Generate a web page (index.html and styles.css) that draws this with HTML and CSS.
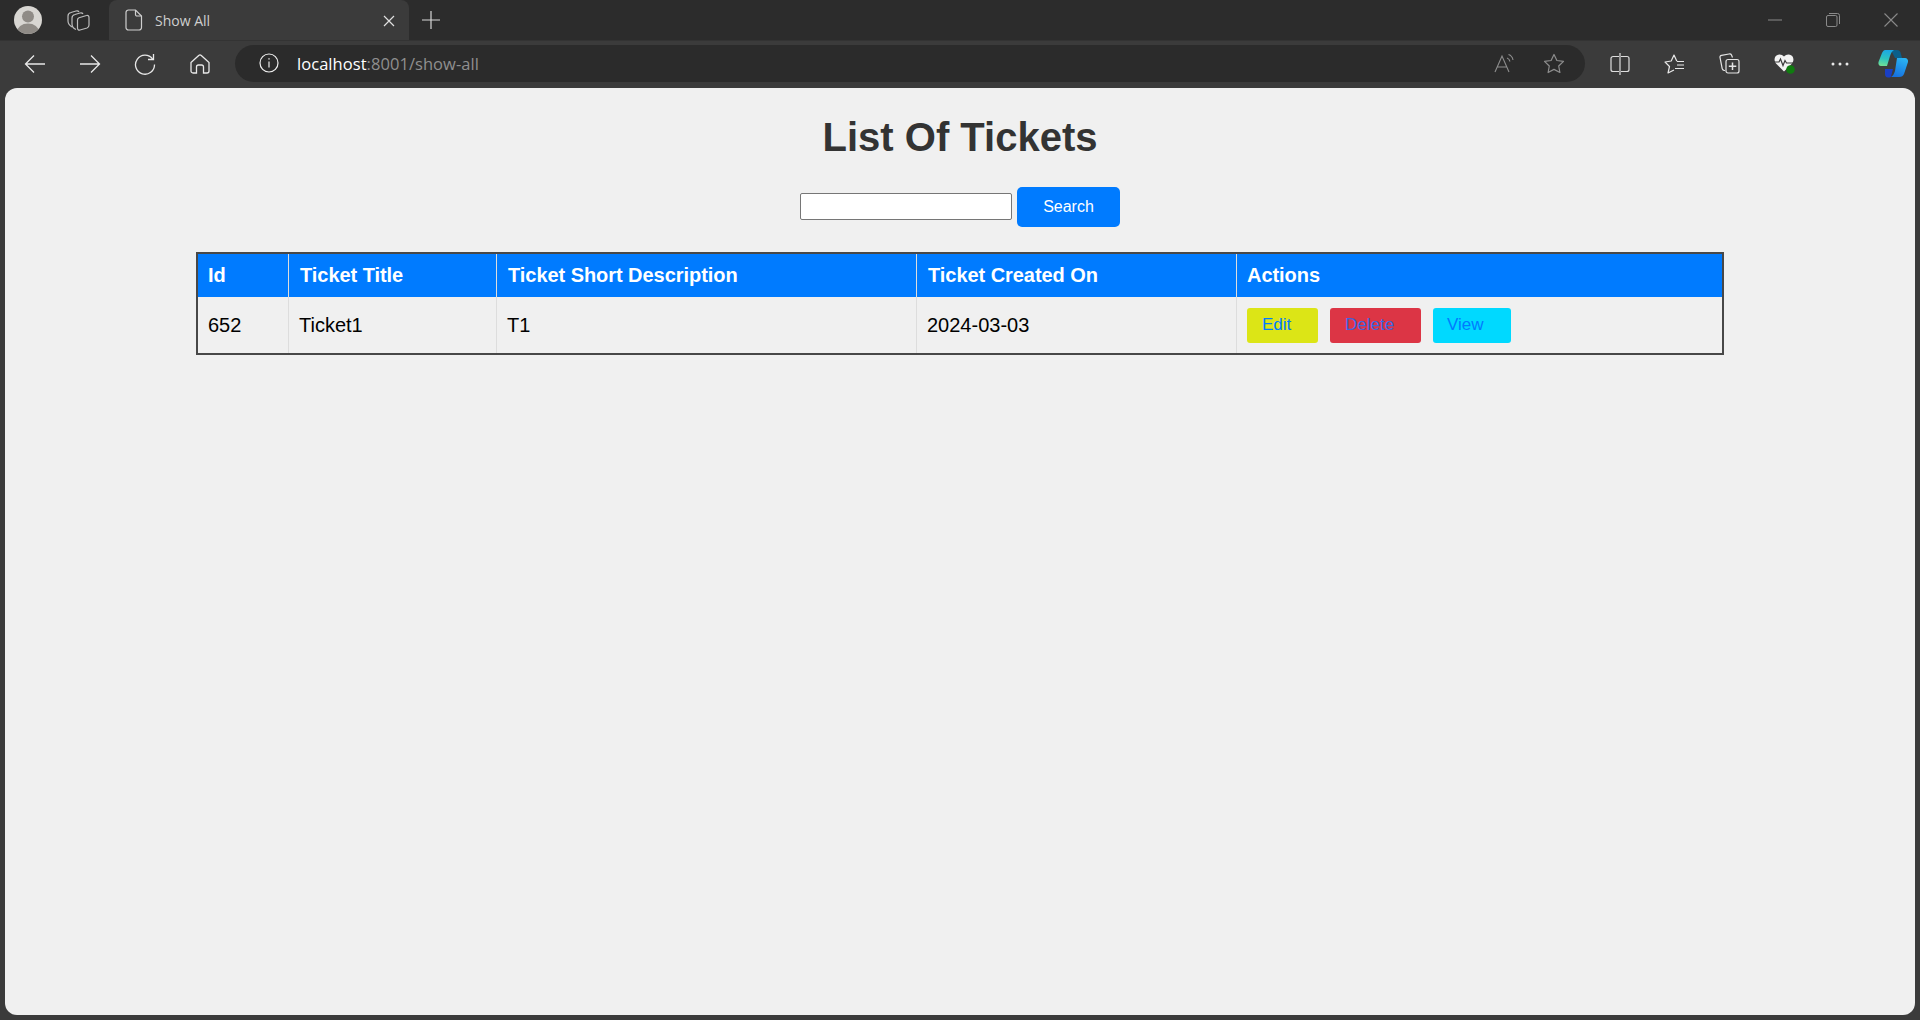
FILE: index.html
```html
<!DOCTYPE html>
<html lang="en">
<head>
<meta charset="utf-8">
<title>Show All</title>
<link rel="stylesheet" href="styles.css">
</head>
<body>
<div class="chrome">
  <div class="tabstrip">
    <div class="profile">
      <svg width="30" height="30" viewBox="0 0 30 30"><defs><clipPath id="pc"><circle cx="15" cy="15" r="14"/></clipPath></defs><circle cx="15" cy="15" r="14" fill="#d8d6d2"/><g clip-path="url(#pc)" fill="#8f8b86"><circle cx="15" cy="11.500" r="6"/><ellipse cx="15" cy="27" rx="11" ry="8.500"/></g></svg>
    </div>
    <div class="wksp">
      <svg width="23" height="21" viewBox="0 0 23 21" fill="none" stroke="#bdbdbd" stroke-width="1.200"><path d="M5 17C2 15 1 13 1 11V6C1 4 2 3 4 2.500L9 1C10.500 .7 11.500 1 12 2"/><path d="M9 19.500C6.500 18.500 5 17 5 14V8C5 6 6 5 8 4.500L13 3C14.500 2.700 15.500 3 16 4"/><path d="M12 7.800L19.500 5.500C21 5 22 6 22 7.500V15C22 16.500 21.500 17.500 20 18L13 20C11.500 20.500 10.500 19.500 10.500 18V10C10.500 9 11 8.200 12 7.800z"/></svg>
    </div>
    <div class="tab">
      <svg class="tab-icon" width="18" height="22" viewBox="0 0 18 22" fill="none" stroke="#cfcfcf" stroke-width="1.200"><path d="M3.500 1h7L16.500 7v11.500a2.500 2.500 0 0 1-2.500 2.500H3.500A2.500 2.500 0 0 1 1 18.500v-15A2.500 2.500 0 0 1 3.500 1z"/><path d="M10.500 1v4.500a1.500 1.500 0 0 0 1.500 1.500h4.500"/></svg>
      <span class="tab-title">Show All</span>
      <svg class="tab-close" width="12" height="12" viewBox="0 0 12 12" stroke="#e0e0e0" stroke-width="1.200"><path d="M1 1l10 10M11 1L1 11"/></svg>
    </div>
    <div class="newtab">
      <svg width="18" height="18" viewBox="0 0 18 18" stroke="#d8d8d8" stroke-width="1.200"><path d="M9 0v18M0 9h18"/></svg>
    </div>
    <div class="winctl">
      <span class="winbtn"><svg width="14" height="14" viewBox="0 0 14 14" stroke="#8a8a8a"><path d="M0 7h14"/></svg></span>
      <span class="winbtn"><svg width="14" height="14" viewBox="0 0 14 14" fill="none" stroke="#8a8a8a"><rect x=".5" y="2.500" width="10.500" height="11" rx="1.500"/><path d="M3 .5h8.500a2 2 0 0 1 2 2V11"/></svg></span>
      <span class="winbtn"><svg width="14" height="14" viewBox="0 0 14 14" stroke="#8a8a8a" stroke-width="1.100"><path d="M.5.5l13 13M13.500.5l-13 13"/></svg></span>
    </div>
  </div>
  <div class="toolbar">
    <div class="navs">
      <span class="navbtn"><svg width="22" height="20" viewBox="0 0 22 20" fill="none" stroke="#e8e8e8" stroke-width="1.300"><path d="M21 10H1.500M10 1.500L1.500 10l8.500 8.500"/></svg></span>
      <span class="navbtn"><svg width="22" height="20" viewBox="0 0 22 20" fill="none" stroke="#e8e8e8" stroke-width="1.300"><path d="M1 10h19.500M12 1.500l8.500 8.500-8.500 8.500"/></svg></span>
      <span class="navbtn"><svg width="22" height="22" viewBox="0 0 22 22" fill="none" stroke="#e8e8e8" stroke-width="1.300"><path d="M18.600 6A9.500 9.500 0 1 0 20.500 11.500"/><path d="M19.500 1v5.500H14"/></svg></span>
      <span class="navbtn"><svg width="20" height="20" viewBox="0 0 20 20" fill="none" stroke="#e8e8e8" stroke-width="1.300"><path d="M1 8.500L8.700 1.500a2 2 0 0 1 2.600 0L19 8.500v8.500a2 2 0 0 1-2 2h-3.500v-6a2 2 0 0 0-2-2h-3a2 2 0 0 0-2 2v6H3a2 2 0 0 1-2-2z"/></svg></span>
    </div>
    <div class="address">
      <svg class="info" width="20" height="20" viewBox="0 0 20 20" fill="none" stroke="#ededed" stroke-width="1.200"><circle cx="10" cy="10" r="9"/><path d="M10 8.500v6"/><path d="M10 5.200v1.400" stroke-width="1.400"/></svg>
      <span class="url"><span class="host">localhost</span>:8001/show-all</span>
      <span class="addr-end">
        <svg width="20" height="20" viewBox="0 0 20 20" fill="none" stroke="#8e8e8e" stroke-width="1.100"><path d="M1 19L8 3l7 16M3.500 14h9"/><path d="M13 5c1.500.5 2.500 1.500 3 3.500M14.500 1.500c2.500.8 4 2.500 4.500 5.500"/></svg>
        <svg width="22" height="21" viewBox="0 0 22 21" fill="none" stroke="#8e8e8e" stroke-width="1.200"><path d="M11 1.500l2.900 6 6.600.9-4.800 4.600 1.200 6.500L11 16.400l-5.900 3.100 1.200-6.500L1.500 8.400l6.600-.9z" stroke-linejoin="round"/></svg>
      </span>
    </div>
    <div class="tools">
      <span class="toolbtn"><svg width="20" height="22" viewBox="0 0 20 22" fill="none" stroke="#dedede" stroke-width="1.200"><path d="M9 3.500H3a2 2 0 0 0-2 2v11a2 2 0 0 0 2 2h6M11 3.500h6a2 2 0 0 1 2 2v11a2 2 0 0 1-2 2h-6M10 0v22"/></svg></span>
      <span class="toolbtn"><svg width="21" height="20" viewBox="0 0 21 20" fill="none" stroke="#e8e8e8" stroke-width="1.200"><path d="M13 7L12.500 6.500 10 1 7.200 7 1 8l4.500 4.500L4 19l6-3" stroke-linejoin="round"/><path d="M13 7.500h7M13 11h7M11 14.500h9"/></svg></span>
      <span class="toolbtn"><svg width="21" height="21" viewBox="0 0 21 21" fill="none" stroke="#e4e4e4" stroke-width="1.200"><path d="M6 17.500l-1-.1c-1.100-.2-1.600-.8-1.800-1.700L1 4.500c-.3-1.200.4-2 1.500-2.200L10 1c1.200-.2 2-.1 2.500 1l1 2.500"/><rect x="7" y="6.500" width="13" height="13.500" rx="2"/><path d="M13.500 9.500v7.500M9.800 13.200h7.500" stroke-width="1.500"/></svg></span>
      <span class="toolbtn"><svg width="22" height="22" viewBox="0 0 22 22"><path d="M10 18.500L2 10.500C0 8 0 4.500 2.500 2.500c2.500-1.800 5.500-1.200 7.500 1 2-2.200 5-2.800 7.500-1C20 4.500 20 8 18 10.500l-3 3-5 5z" fill="#f2f2f2"/><path d="M0 9h5l1.500-3 2.500 6.500 2-5 1.500 2.500H20" fill="none" stroke="#3b3b3b" stroke-width="1.200"/><circle cx="16.500" cy="16.500" r="4.300" fill="#107c10"/></svg></span>
      <span class="toolbtn"><svg width="18" height="4" viewBox="0 0 18 4" fill="#e8e8e8"><circle cx="2" cy="2" r="1.500"/><circle cx="9" cy="2" r="1.500"/><circle cx="16" cy="2" r="1.500"/></svg></span>
      <span class="toolbtn toolbtn-last"><svg width="31" height="29" viewBox="0 0 31 29"><defs><linearGradient id="c1" x1="0.600" y1="0" x2="0.400" y2="1"><stop offset="0" stop-color="#1ba6e6"/><stop offset=".55" stop-color="#2cc3c0"/><stop offset="1" stop-color="#6fdc96"/></linearGradient><linearGradient id="c2" x1="0.700" y1="0" x2="0.300" y2="1"><stop offset="0" stop-color="#2ab4f2"/><stop offset="1" stop-color="#1670e0"/></linearGradient></defs><path d="M13 1h6c2 0 3 1 3.500 2.500L24 9h-7z" fill="#0b5f8a"/><path d="M7 20h8l-2 7.500c-.3.700-1 1-2 1h-1C8 28.500 7 27 7 25z" fill="#1a3fc4"/><path d="M7 1h9c-2 1-3 3-4 6L9 17H3C1 17 0 15 .5 13L4 4C5 2 6 1 7 1z" fill="url(#c1)"/><path d="M19 9h8c2 0 3.500 2 3 4L26 25c-1 2-2 3-5 3H13c2-1 3-3 4-6z" fill="url(#c2)"/></svg></span>
    </div>
  </div>
</div>
<main class="page">
  <h1 class="title">List Of Tickets</h1>
  <form class="search">
    <input class="search-input" type="text">
    <button class="search-btn" type="button">Search</button>
  </form>
  <table class="tickets">
    <colgroup>
      <col class="c1"><col class="c2"><col class="c3"><col class="c4"><col class="c5">
    </colgroup>
    <thead>
      <tr><th class="th-id">Id</th><th>Ticket Title</th><th>Ticket Short Description</th><th>Ticket Created On</th><th class="th-actions">Actions</th></tr>
    </thead>
    <tbody>
      <tr>
        <td>652</td><td>Ticket1</td><td>T1</td><td>2024-03-03</td>
        <td class="actions">
          <a class="act act-edit" href="#">Edit</a><a class="act act-delete" href="#">Delete</a><a class="act act-view" href="#">View</a>
        </td>
      </tr>
    </tbody>
  </table>
</main>
</body>
</html>
```
FILE: styles.css
```css
* { box-sizing: border-box; }
html, body { height: 100%; }
body {
  margin: 0;
  background: #3b3b3b;
  font-family: "Liberation Sans", Arial, sans-serif;
  overflow: hidden;
  display: flex;
  flex-direction: column;
}
.chrome { flex: none; height: 88px; font-family: "Open Sans", "Noto Sans", sans-serif; }
.tabstrip { height: 40px; background: #2c2c2c; display: flex; align-items: center; }
.profile { width: 56px; padding-left: 13px; display: flex; }
.wksp { width: 53px; display: flex; justify-content: center; padding-right: 8px; }
.tab {
  width: 300px; height: 40px; background: #3b3b3b; border-radius: 8px 8px 0 0;
  display: flex; align-items: center; padding: 0 14px 0 16px; flex: none;
}
.tab-icon { flex: none; }
.tab-title { margin-left: 12px; font-size: 14px; color: #cfcfcf; flex: 1; }
.tab-close { flex: none; margin-bottom: -2px; }
.newtab { width: 44px; display: flex; justify-content: center; }
.winctl { margin-left: auto; display: flex; }
.winbtn { width: 58px; display: flex; justify-content: center; }
.winbtn:last-child { width: 59px; margin-left: -1px; }
.toolbar { height: 48px; background: #3b3b3b; display: flex; align-items: center; border-top: 1px solid #333; padding-bottom: 2px; }
.navs { display: flex; flex: none; width: 235px; padding-left: 7px; }
.navbtn { width: 55px; display: flex; justify-content: center; align-items: center; }
.address {
  flex: none; width: 1350px; height: 37px; background: #2b2b2b; border-radius: 19px;
  display: flex; align-items: center; padding-left: 24px; margin-top: -1px;
}
.info { flex: none; }
.url { margin-left: 18px; font-size: 16.500px; color: #8f8f8f; letter-spacing: .05px; }
.host { color: #fff; }
.addr-end { margin-left: auto; display: flex; align-items: center; gap: 29px; padding-right: 20px; }
.tools { display: flex; flex: none; align-items: center; margin-left: 7px; }
.toolbtn { width: 55px; height: 30px; display: flex; justify-content: center; align-items: center; }
.toolbtn-last { width: 53px; }
.page {
  flex: 1; margin: 0 5px 5px; background: #f0f0f0; border-radius: 12px;
  padding: 26px 0 0; display: flex; flex-direction: column; align-items: center;
}
.title { margin: 0; font-size: 40px; line-height: 46px; font-weight: 700; color: #333; }
.search { margin-top: 27px; display: flex; align-items: center; gap: 5px; }
.search-input { width: 212px; height: 27px; margin-bottom: 2px; border: 1px solid #767676; border-radius: 2px; background: #fff; padding: 1px 2px; }
.search-btn {
  width: 103px; height: 40px; border: 0; border-radius: 5px; background: #007bff;
  color: #fff; font: 16px "Liberation Sans", Arial, sans-serif;
}
.tickets {
  margin-top: 25px; width: 1528px; table-layout: fixed; border-collapse: separate; border-spacing: 0;
  border: 2px solid #484848; font-size: 20px;
}
.c1 { width: 91px; }
.c2 { width: 208px; }
.c3 { width: 420px; }
.c4 { width: 320px; }
.tickets th {
  background: #007bff; color: #fff; font-weight: 700; text-align: left; height: 43px;
  padding: 0 10px 0 11px; border-right: 1px solid #ddd; font-size: 20px; letter-spacing: -.05px;
}
.tickets .th-id, .tickets .th-actions { padding-left: 10px; }
.tickets th:last-child, .tickets td:last-child { border-right: 0; }
.tickets td { height: 56px; padding: 0 10px; border-right: 1px solid #ddd; font-size: 20px; color: #000; }
.actions { white-space: nowrap; }
.act {
  display: inline-block; height: 35px; line-height: 33px; border-radius: 3px; color: #007bff;
  font-size: 17px; margin-right: 12px; vertical-align: middle; text-decoration: none;
}
.act-edit { width: 71px; padding-left: 15px; background: #dce516; }
.act-delete { width: 91px; padding-left: 15px; background: #dc3545; color: #3a66e0; }
.act-view { width: 78px; padding-left: 14px; background: #00d9ff; }
```
